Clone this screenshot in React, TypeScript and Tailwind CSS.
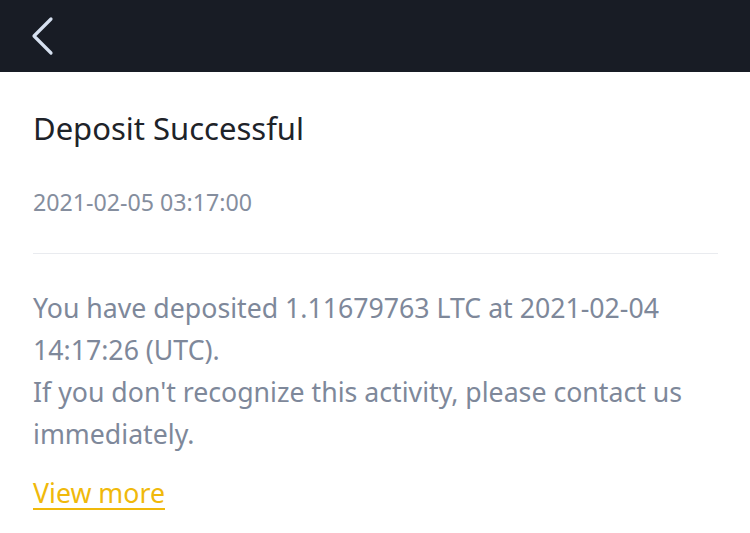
import { useState } from 'react'

const notice = {
  title: 'Deposit Successful',
  time: '2021-02-05 03:17:00',
  amount: '1.11679763 LTC',
  creditedAt: '2021-02-04 14:17:26 (UTC)',
}

function BackChevron() {
  return (
    <svg width="24" height="40" viewBox="0 0 24 40" fill="none" className="text-[#d6e0f0]">
      <polyline
        points="20,3 3,20 20,37"
        stroke="currentColor"
        strokeWidth="3.2"
        strokeLinecap="round"
        strokeLinejoin="round"
      />
    </svg>
  )
}

export default function App() {
  const [expanded, setExpanded] = useState(false)

  return (
    <div className="min-h-screen bg-white font-['Noto_Sans','Open_Sans',sans-serif]">
      <header className="flex h-[72px] items-center bg-[#181c25] px-[31px]">
        <button aria-label="Back" className="-mt-[1px] flex items-center">
          <BackChevron />
        </button>
      </header>

      <main className="px-[33px] pt-[36px]">
        <h1 className="text-[31px] leading-[40px] font-normal text-[#1e2329]">{notice.title}</h1>
        <p className="mt-[39px] text-[23.2px] leading-[30px] text-[#858e9e]">{notice.time}</p>

        <div className="mt-[36px] mr-[-1px] h-px bg-[#e9ebef]" />

        <div className="mt-[33px] text-[26.7px] leading-[42px] text-[#7e889a]">
          <p>
            You have deposited {notice.amount} at {notice.creditedAt}.
          </p>
          <p>If you don't recognize this activity, please contact us immediately.</p>
        </div>

        <button
          onClick={() => setExpanded(!expanded)}
          className="mt-[17px] text-[26.7px] leading-[42px] text-[#f0b90b] underline decoration-[1.5px] underline-offset-[5px]"
        >
          View more
        </button>
      </main>
    </div>
  )
}
